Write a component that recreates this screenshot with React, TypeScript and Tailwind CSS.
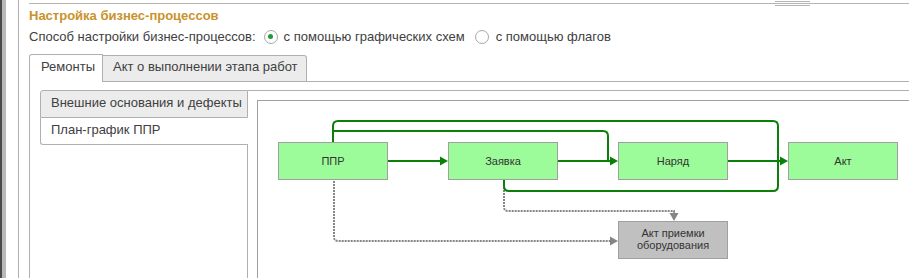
export default function App() {
  return (
    <div className="w-[909px] h-[278px] overflow-hidden bg-white flex font-['Liberation_Sans',Arial,sans-serif] text-[13px] leading-[15px] text-[#404040]">
      {/* window edge */}
      <div className="w-[2px] shrink-0 bg-[#4a4a4a]" />
      <div className="w-[4px] shrink-0 bg-[#b9b9b9]" />
      <div className="w-[12px] shrink-0" />
      <div className="w-px shrink-0 bg-[#b0b0b0]" />
      <div className="w-[10px] shrink-0" />

      {/* form */}
      <div className="flex-1 flex flex-col pt-[3px] min-w-0">
        <div className="relative border-t border-[#b4b4b4]">
          <div className="absolute left-[746px] top-[-3px] w-[35px] h-[5px] border-y border-[#b4b4b4]" />
        </div>

        <div className="mt-[4px] h-[15px] font-bold text-[#c9922b] whitespace-nowrap">
          Настройка бизнес-процессов
        </div>

        <div className="mt-[6px] h-[15px] flex items-center whitespace-nowrap">
          <span>Способ настройки бизнес-процессов:</span>
          <span className="ml-[8px] w-[14px] h-[14px] rounded-full border border-[#a8a8a8] flex items-center justify-center">
            <span className="w-[5px] h-[5px] rounded-full bg-[#1f9a3a]" />
          </span>
          <span className="ml-[6px]">с помощью графических схем</span>
          <span className="ml-[10px] w-[14px] h-[14px] rounded-full border border-[#a8a8a8]" />
          <span className="ml-[7px]">с помощью флагов</span>
        </div>

        {/* tabs */}
        <div className="mt-[10px] h-[28px] flex items-end">
          <div className="w-[74px] h-[28px] border-t border-x border-[#b0b0b0] rounded-tl-[3px] bg-white pl-[11px] pt-[4px] whitespace-nowrap">
            Ремонты
          </div>
          <div className="w-[204px] h-[27px] border-t border-r border-b border-[#b0b0b0] rounded-tr-[3px] bg-[#ececec] pl-[10px] pt-[3px] whitespace-nowrap">
            Акт о выполнении этапа работ
          </div>
          <div className="flex-1 border-b border-[#b0b0b0]" />
        </div>

        <div className="flex-1 flex border-l border-[#b0b0b0] pl-[10px] pt-[8px]">
          {/* vertical tabs */}
          <div className="w-[208px] shrink-0 flex flex-col">
            <div className="h-[28px] border border-[#b0b0b0] rounded-tl-[3px] bg-[#ececec] pl-[10px] pt-[4px] whitespace-nowrap">
              Внешние основания и дефекты
            </div>
            <div className="h-[27px] border-l border-b border-[#b0b0b0] rounded-bl-[3px] bg-white pl-[10px] pt-[4px] whitespace-nowrap">
              План-график ППР
            </div>
            <div className="flex-1 border-r border-[#b0b0b0]" />
          </div>

          {/* page */}
          <div className="flex-1 flex flex-col border-t border-[#b0b0b0] pl-[9px] pt-[9px] min-w-0">
            <div className="flex-1 border-l border-t border-[#a0a0a0] overflow-hidden">
              <Diagram />
            </div>
          </div>
        </div>
      </div>
    </div>
  );
}

function Arrow({ x, y, dir, color }: { x: number; y: number; dir: "right" | "down"; color: string }) {
  const pts =
    dir === "right"
      ? `${x - 8},${y - 4.5} ${x},${y} ${x - 8},${y + 4.5}`
      : `${x - 4.5},${y - 8} ${x},${y} ${x + 4.5},${y - 8}`;
  return <polygon points={pts} fill={color} />;
}

function Box({ x, y, fill, lines }: { x: number; y: number; fill: string; lines: string[] }) {
  const cx = x + 55;
  return (
    <g>
      <rect x={x + 0.5} y={y + 0.5} width={109} height={37} fill={fill} stroke="#a0a0a0" />
      {lines.length === 1 ? (
        <text x={cx} y={y + 23} textAnchor="middle">
          {lines[0]}
        </text>
      ) : (
        lines.map((l, i) => (
          <text key={l} x={cx} y={y + 16 + i * 12} textAnchor="middle">
            {l}
          </text>
        ))
      )}
    </g>
  );
}

function Diagram() {
  const green = "#0a800a";
  const gray = "#858585";
  return (
    <svg
      width={660}
      height={180}
      viewBox="258 101 660 180"
      className="block"
      fontFamily="'Liberation Sans', Arial, sans-serif"
      fontSize={11}
      fill="#333"
    >
      {/* dashed links */}
      <g fill="none" stroke={gray} strokeWidth={2} strokeDasharray="2 1">
        <path d="M334 181 V237 Q334 241 338 241 H611" />
        <path d="M504 181 V207 Q504 211 508 211 H674 V214" />
      </g>
      <Arrow x={618} y={241} dir="right" color={gray} />
      <Arrow x={674} y={221} dir="down" color={gray} />

      {/* solid links */}
      <g fill="none" stroke={green} strokeWidth={2}>
        <path d="M388 161 H441" />
        <path d="M558 161 H611" />
        <path d="M728 161 H781" />
        <path d="M333 142 V126 Q333 121 338 121 H773 Q778 121 778 126 V161" />
        <path d="M333 131 H603 Q608 131 608 136 V161" />
        <path d="M504 180 V186 Q504 191 509 191 H773 Q778 191 778 186 V161" />
      </g>
      <Arrow x={448} y={161} dir="right" color={green} />
      <Arrow x={618} y={161} dir="right" color={green} />
      <Arrow x={788} y={161} dir="right" color={green} />

      <Box x={278} y={142} fill="#9dfc9a" lines={["ППР"]} />
      <Box x={448} y={142} fill="#9dfc9a" lines={["Заявка"]} />
      <Box x={618} y={142} fill="#9dfc9a" lines={["Наряд"]} />
      <Box x={788} y={142} fill="#9dfc9a" lines={["Акт"]} />
      <Box x={618} y={221} fill="#c0c0c0" lines={["Акт приемки", "оборудования"]} />
    </svg>
  );
}
